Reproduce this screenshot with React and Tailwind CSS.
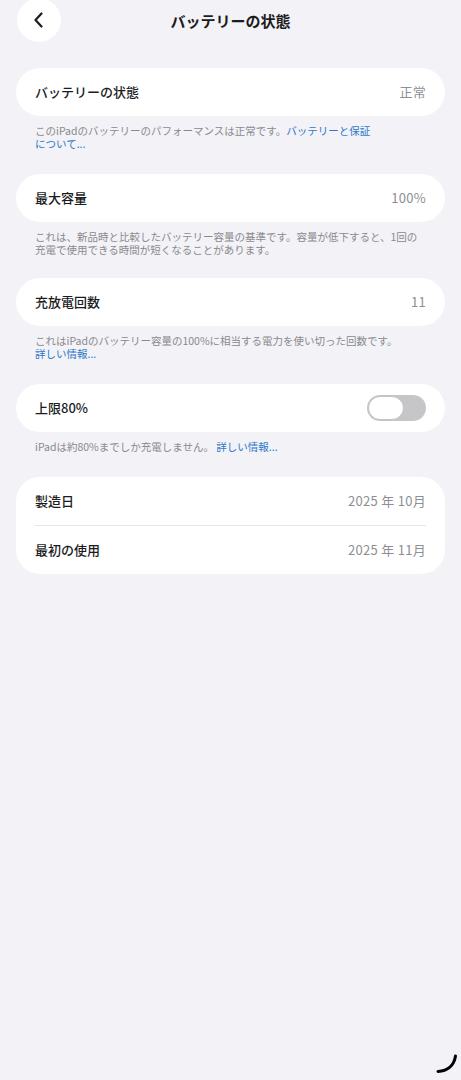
const font = { fontFamily: '"Noto Sans CJK JP", "Noto Sans", sans-serif' };

const Card = ({ children }) => (
  <div className="bg-white rounded-[24px] px-[19px]">{children}</div>
);

const Row = ({ label, value, children }) => (
  <div className="h-12 flex items-center justify-between">
    <span className="text-[13px] font-medium text-[#1c1c1e]">{label}</span>
    {value && <span className="text-[13px] text-[#8e8e93] tracking-[0.3px]">{value}</span>}
    {children}
  </div>
);

const Note = ({ children }) => (
  <p className="px-[19px] pt-2 text-[10.5px] leading-[13px] text-[#8a8a8e]">{children}</p>
);

const Link = ({ children }) => <span className="text-[#2f78c8]">{children}</span>;

const Toggle = () => (
  <div className="w-[59px] h-[26px] rounded-full bg-[#c6c6c8] p-px">
    <div className="w-[36px] h-[24px] rounded-full bg-white border border-[#c2c2c4]" />
  </div>
);

const App = () => {
  return (
    <div className="relative min-h-[1080px] bg-[#f2f2f7] overflow-hidden" style={font}>
      {/* Header */}
      <div className="relative h-[42px] flex items-center justify-center">
        <button className="absolute left-[17px] top-[-2px] w-11 h-11 rounded-full bg-white flex items-center justify-center">
          <svg width="14" height="16" viewBox="0 0 14 16" fill="none">
            <path d="M9.5 1.5L3.5 8l6 6.5" stroke="#1c1c1e" strokeWidth="2.2" strokeLinecap="round" strokeLinejoin="round" />
          </svg>
        </button>
        <h1 className="text-[15px] font-bold text-[#1c1c1e]">バッテリーの状態</h1>
      </div>

      <div className="px-4 pt-[26px] flex flex-col">
        <Card>
          <Row label="バッテリーの状態" value="正常" />
        </Card>
        <Note>
          このiPadのバッテリーのパフォーマンスは正常です。<Link>バッテリーと保証</Link>
          <br />
          <Link>について...</Link>
        </Note>

        <div className="mt-6">
          <Card>
            <Row label="最大容量" value="100%" />
          </Card>
          <Note>
            これは、新品時と比較したバッテリー容量の基準です。容量が低下すると、1回の
            <br />
            充電で使用できる時間が短くなることがあります。
          </Note>
        </div>

        <div className="mt-[22px]">
          <Card>
            <Row label="充放電回数" value="11" />
          </Card>
          <Note>
            これはiPadのバッテリー容量の100%に相当する電力を使い切った回数です。
            <br />
            <Link>詳しい情報...</Link>
          </Note>
        </div>

        <div className="mt-6">
          <Card>
            <Row label="上限80%">
              <Toggle />
            </Row>
          </Card>
          <Note>
            iPadは約80%までしか充電しません。 <Link>詳しい情報...</Link>
          </Note>
        </div>

        <div className="mt-6">
          <Card>
            <Row label="製造日" value="2025 年 10月" />
            <div className="h-px bg-[#e5e5ea]" />
            <Row label="最初の使用" value="2025 年 11月" />
          </Card>
        </div>
      </div>

      {/* window corner handle */}
      <svg className="absolute right-[3px] bottom-[6px]" width="22" height="20" viewBox="0 0 22 20" fill="none">
        <path d="M2 17.5C11 17 18 12 19.5 2" stroke="#000" strokeWidth="3" strokeLinecap="round" />
      </svg>
    </div>
  );
};

export default App;
